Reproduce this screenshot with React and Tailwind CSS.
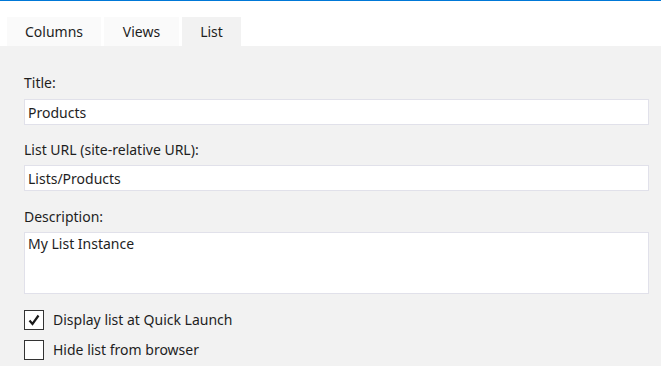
import React from "react";

function Check({ checked, label }) {
  return (
    <label className="flex items-center h-5">
      <span className="w-5 h-5 border border-[#333333] bg-white flex items-center justify-center">
        {checked && (
          <svg width="14" height="14" viewBox="0 0 14 14">
            <path d="M2.5 7.5 L5.5 11 L11.5 2.5" fill="none" stroke="#1a1a1a" strokeWidth="2.2" strokeLinejoin="miter" />
          </svg>
        )}
      </span>
      <span className="ml-[9px] leading-5">{label}</span>
    </label>
  );
}

export default function App() {
  return (
    <div
      className="w-[661px] h-[366px] bg-white text-[14px] text-[#1e1e1e] overflow-hidden"
      style={{ fontFamily: '"Noto Sans", "Open Sans", sans-serif' }}
    >
      <div className="h-[1px] bg-[#0078d7]" />
      <div className="flex gap-[3px] pl-[7px] pt-[16px] h-[45px]">
        <div className="w-[94px] h-[29px] bg-[#fafafa] flex items-center justify-center">Columns</div>
        <div className="w-[75px] h-[29px] bg-[#fafafa] flex items-center justify-center">Views</div>
        <div className="w-[59px] h-[29px] bg-[#f2f2f2] flex items-center justify-center">List</div>
      </div>
      <div className="bg-[#f2f2f2] h-[320px] pl-6 pr-3 pt-[27px]">
        <div className="leading-5 h-5">Title:</div>
        <div className="mt-[6px] h-[26px] bg-white border border-[#e1e1ea] flex items-center px-[3px]">Products</div>
        <div className="mt-[15px] leading-5 h-5">List URL (site-relative URL):</div>
        <div className="mt-[5px] h-[26px] bg-white border border-[#e1e1ea] flex items-center px-[3px]">Lists/Products</div>
        <div className="mt-[16px] leading-5 h-5">Description:</div>
        <div className="mt-[5px] h-[62px] bg-white border border-[#e1e1ea] px-[3px] pt-[1px] leading-5">My List Instance</div>
        <div className="mt-[16px]">
          <Check checked label="Display list at Quick Launch" />
        </div>
        <div className="mt-[10px]">
          <Check label="Hide list from browser" />
        </div>
      </div>
    </div>
  );
}
